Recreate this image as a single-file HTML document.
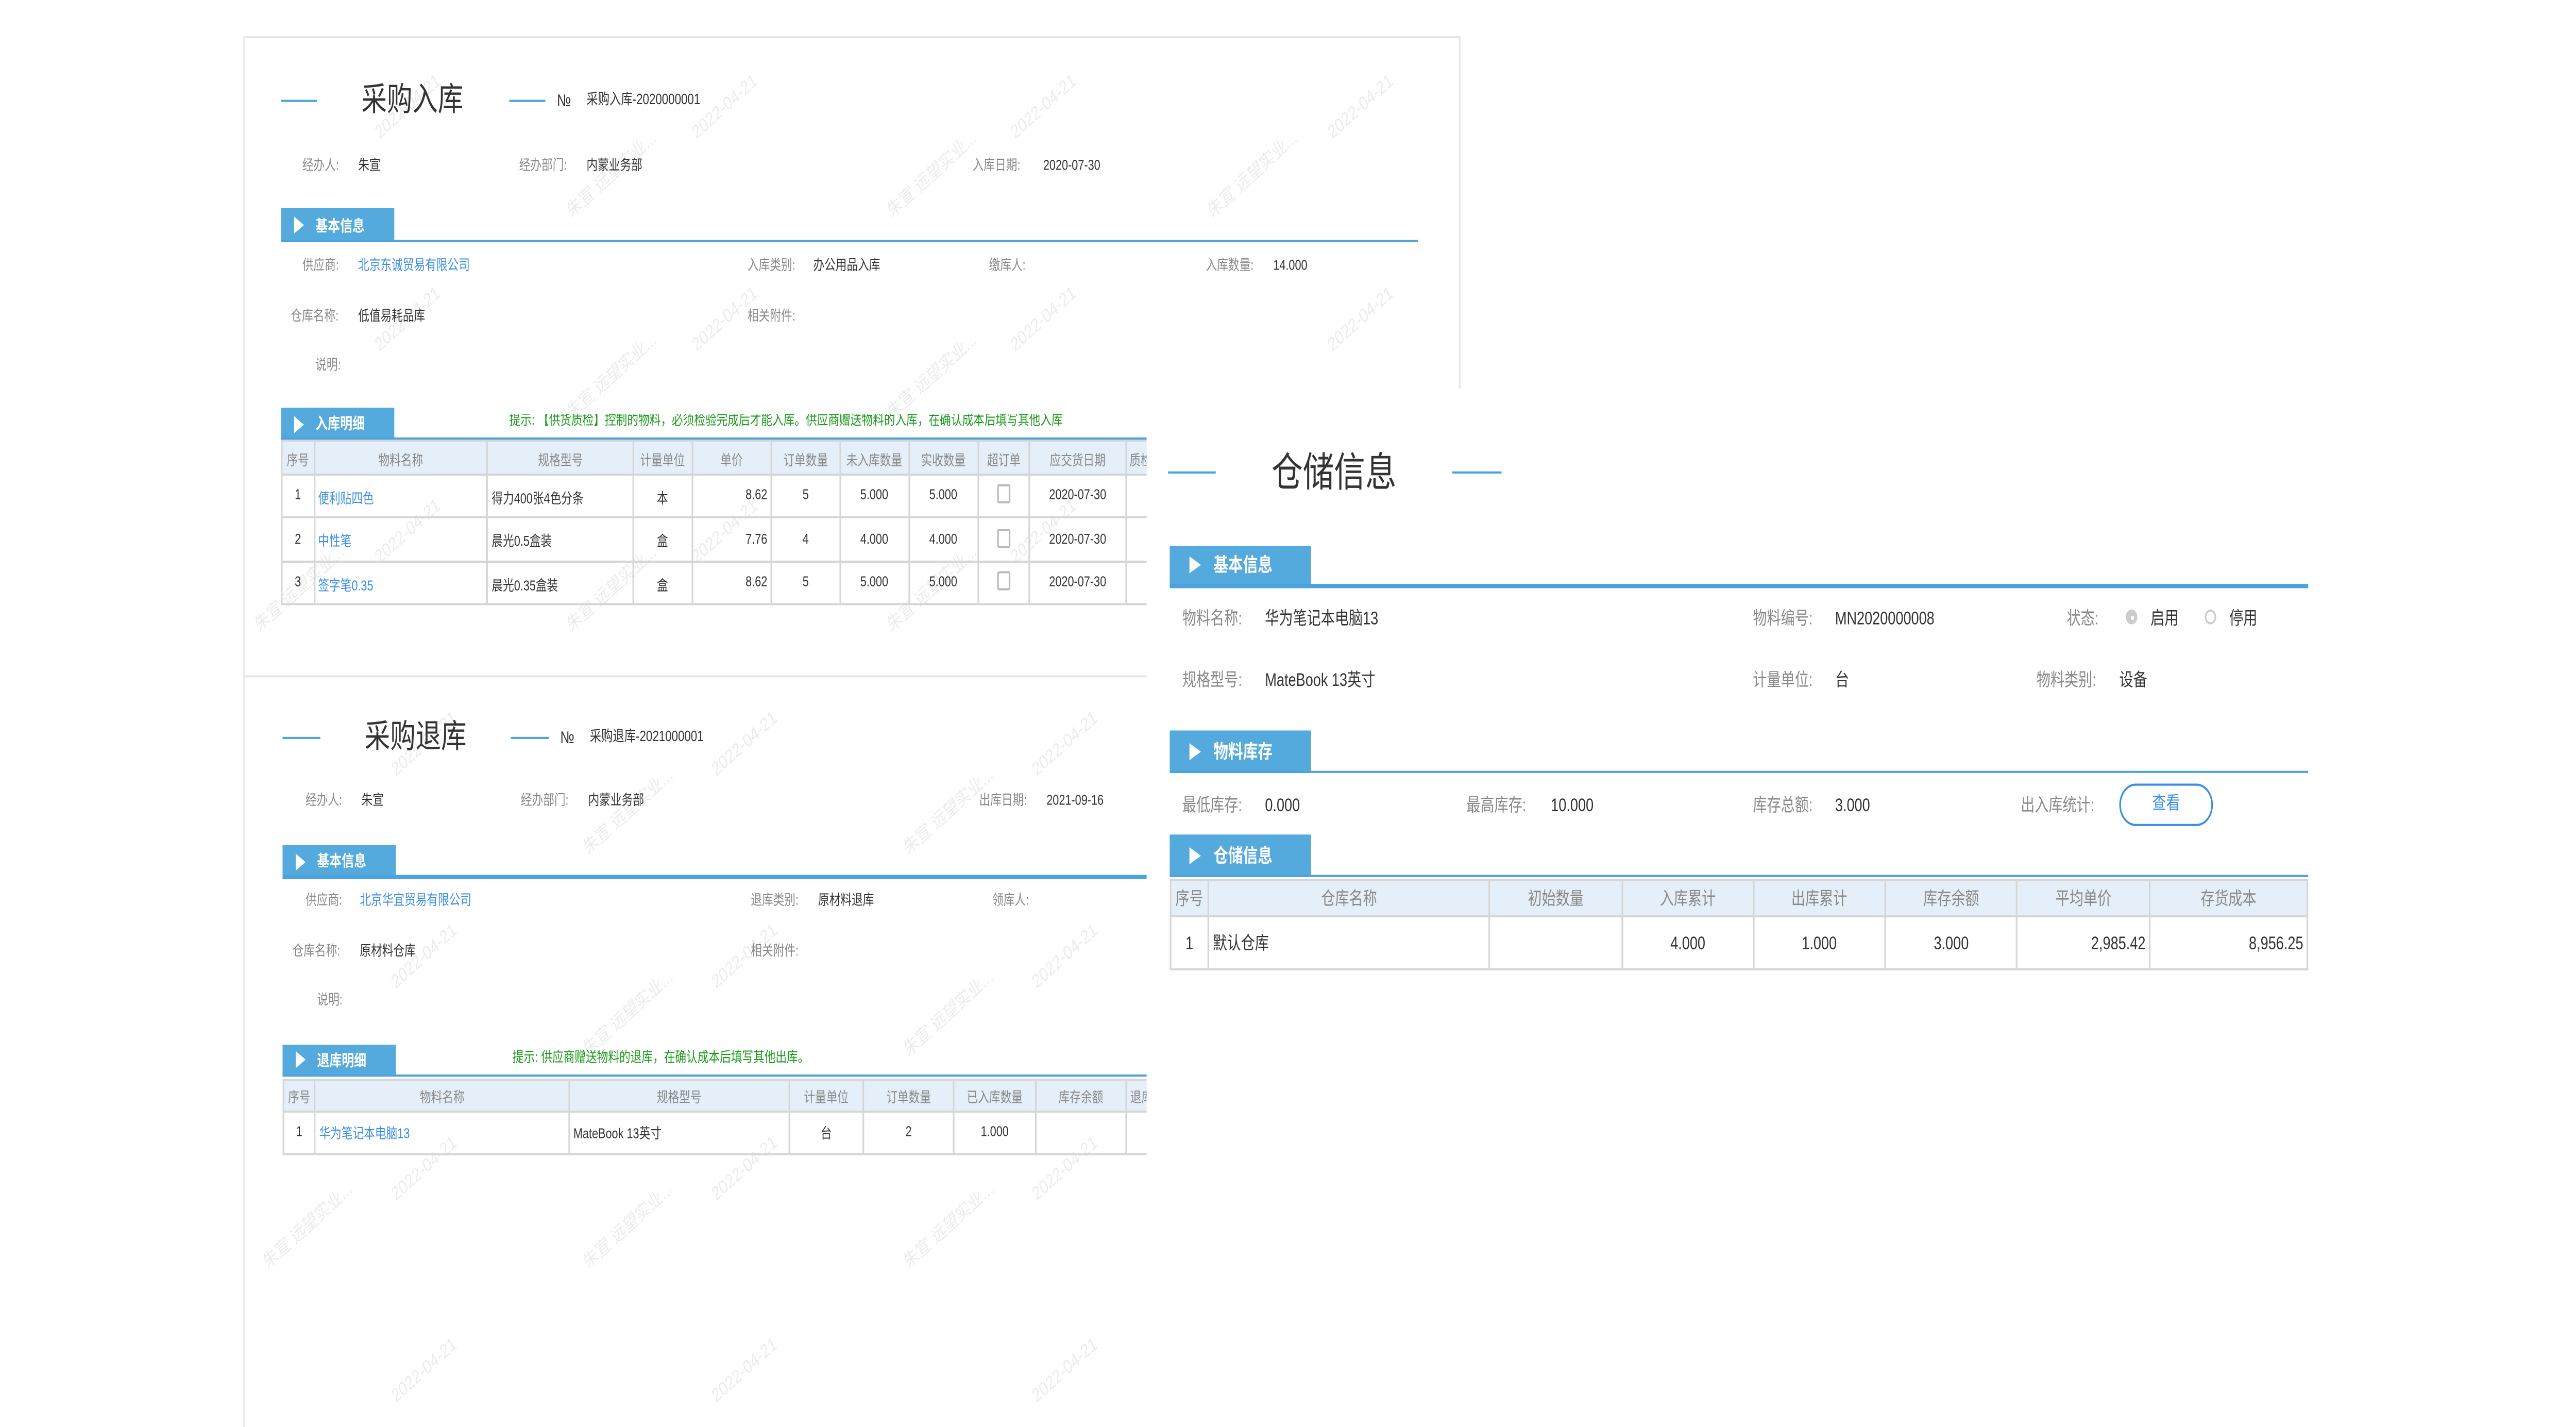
<!DOCTYPE html>
<html><head><meta charset="utf-8">
<style>
html,body{margin:0;padding:0;background:#fff;}
body{width:100vw;height:100vh;overflow:hidden;position:relative;}
#w{position:absolute;left:0;top:0;width:1568px;height:672px;transform:scale(4.11862,4.12054);transform-origin:0 0;font-family:"Liberation Sans","Noto Sans CJK SC",sans-serif;color:#333;}
.a{position:absolute;white-space:nowrap;}
.l{color:#888;}
.b{color:#3a8ee6;}
.sec{position:absolute;background:#55aadd;color:#fff;font-weight:bold;}
.sec i{position:absolute;width:0;height:0;border-top:4px solid transparent;border-bottom:4px solid transparent;border-left:6px solid #fff;}
.sline{position:absolute;height:1.3px;background:#4aa3df;}
table{border-collapse:collapse;table-layout:fixed;position:absolute;}
td{border:0.6px solid #d6d6d6;padding:0 2px;white-space:nowrap;overflow:hidden;}
tr.h td{background:#e5eff9;color:#888;text-align:center;}
.c{text-align:center}.r{text-align:right}
.wm{position:absolute;color:#ececec;transform:rotate(-35deg);white-space:nowrap;font-size:9px;}
.cb{display:inline-block;width:6px;height:7px;border:0.6px solid #bbb;border-radius:1px;}
</style></head><body><div id="w">

<div class="a" style="left:148px;top:17px;width:741px;height:1px;background:#e6e6e6"></div>
<div class="a" style="left:888px;top:17px;width:1px;height:170px;background:#e6e6e6"></div>
<div class="a" style="left:148px;top:17px;width:1px;height:655px;background:#ececec"></div>
<div class="a" style="left:148px;top:318px;width:550px;height:1px;background:#e6e6e6"></div>

<div class="wm" style="left:225px;top:45px">2022-04-21</div>
<div class="wm" style="left:418px;top:45px">2022-04-21</div>
<div class="wm" style="left:612px;top:45px">2022-04-21</div>
<div class="wm" style="left:805px;top:45px">2022-04-21</div>
<div class="wm" style="left:340px;top:75px">朱宣 远望实业...</div>
<div class="wm" style="left:535px;top:75px">朱宣 远望实业...</div>
<div class="wm" style="left:730px;top:75px">朱宣 远望实业...</div>
<div class="wm" style="left:225px;top:145px">2022-04-21</div>
<div class="wm" style="left:418px;top:145px">2022-04-21</div>
<div class="wm" style="left:612px;top:145px">2022-04-21</div>
<div class="wm" style="left:805px;top:145px">2022-04-21</div>
<div class="wm" style="left:340px;top:170px">朱宣 远望实业...</div>
<div class="wm" style="left:535px;top:170px">朱宣 远望实业...</div>
<div class="wm" style="left:225px;top:245px">2022-04-21</div>
<div class="wm" style="left:418px;top:245px">2022-04-21</div>
<div class="wm" style="left:612px;top:245px">2022-04-21</div>
<div class="wm" style="left:150px;top:270px">朱宣 远望实业...</div>
<div class="wm" style="left:340px;top:270px">朱宣 远望实业...</div>
<div class="wm" style="left:535px;top:270px">朱宣 远望实业...</div>
<div class="wm" style="left:235px;top:345px">2022-04-21</div>
<div class="wm" style="left:430px;top:345px">2022-04-21</div>
<div class="wm" style="left:625px;top:345px">2022-04-21</div>
<div class="wm" style="left:350px;top:375px">朱宣 远望实业...</div>
<div class="wm" style="left:545px;top:375px">朱宣 远望实业...</div>
<div class="wm" style="left:235px;top:445px">2022-04-21</div>
<div class="wm" style="left:430px;top:445px">2022-04-21</div>
<div class="wm" style="left:625px;top:445px">2022-04-21</div>
<div class="wm" style="left:350px;top:470px">朱宣 远望实业...</div>
<div class="wm" style="left:545px;top:470px">朱宣 远望实业...</div>
<div class="wm" style="left:235px;top:545px">2022-04-21</div>
<div class="wm" style="left:430px;top:545px">2022-04-21</div>
<div class="wm" style="left:625px;top:545px">2022-04-21</div>
<div class="wm" style="left:155px;top:570px">朱宣 远望实业...</div>
<div class="wm" style="left:350px;top:570px">朱宣 远望实业...</div>
<div class="wm" style="left:545px;top:570px">朱宣 远望实业...</div>
<div class="wm" style="left:235px;top:640px">2022-04-21</div>
<div class="wm" style="left:430px;top:640px">2022-04-21</div>
<div class="wm" style="left:625px;top:640px">2022-04-21</div>

<!-- Panel 1 -->
<div class="a" style="left:171px;top:47px;width:22px;height:1.3px;background:#4aa3df"></div>
<div class="a" style="left:220px;top:39px;font-size:15.5px;line-height:17px">采购入库</div>
<div class="a" style="left:310px;top:47px;width:22px;height:1.3px;background:#4aa3df"></div>
<div class="a" style="left:339px;top:43px;font-size:8px;line-height:9px">№</div>
<div class="a" style="left:357px;top:44px;font-size:7px;line-height:8px">采购入库-2020000001</div>

<div style="font-size:6.8px;line-height:8px">
<div class="a l" style="left:184px;top:75px">经办人:</div><div class="a" style="left:218px;top:75px">朱宣</div>
<div class="a l" style="left:316px;top:75px">经办部门:</div><div class="a" style="left:357px;top:75px">内蒙业务部</div>
<div class="a l" style="left:592px;top:75px">入库日期:</div><div class="a" style="left:635px;top:75px">2020-07-30</div>
<div class="a l" style="left:184px;top:122px">供应商:</div><div class="a b" style="left:218px;top:122px">北京东诚贸易有限公司</div>
<div class="a l" style="left:455px;top:122px">入库类别:</div><div class="a" style="left:495px;top:122px">办公用品入库</div>
<div class="a l" style="left:602px;top:122px">缴库人:</div>
<div class="a l" style="left:734px;top:122px">入库数量:</div><div class="a" style="left:775px;top:122px">14.000</div>
<div class="a l" style="left:177px;top:146px">仓库名称:</div><div class="a" style="left:218px;top:146px">低值易耗品库</div>
<div class="a l" style="left:455px;top:146px">相关附件:</div>
<div class="a l" style="left:192px;top:169px">说明:</div>
</div>

<div class="sec" style="left:171px;top:98px;width:69px;height:16px"><i style="left:8px;top:4px"></i><span class="a" style="left:21px;top:3.5px;font-size:7.5px;line-height:9px">基本信息</span></div>
<div class="sline" style="left:171px;top:112.7px;width:692px"></div>
<div class="sec" style="left:171px;top:192px;width:69px;height:15.5px"><i style="left:8px;top:3.8px"></i><span class="a" style="left:21px;top:3.3px;font-size:7.5px;line-height:9px">入库明细</span></div>
<div class="sline" style="left:171px;top:206px;width:527px"></div>
<div class="a" style="left:310px;top:194.5px;font-size:6.8px;line-height:8px;color:#1a9a1a;width:388px;overflow:hidden">提示: 【供货质检】控制的物料，必须检验完成后才能入库。供应商赠送物料的入库，在确认成本后填写其他入库</div>

<div class="a" style="left:171px;top:207.3px;width:527px;height:80px;overflow:hidden">
<table style="left:0;top:0;width:560px;font-size:6.8px">
<colgroup><col style="width:19.6px"><col style="width:105.7px"><col style="width:88.7px"><col style="width:35.6px"><col style="width:48.5px"><col style="width:41.7px"><col style="width:41.8px"><col style="width:42.2px"><col style="width:31.7px"><col style="width:58.1px"><col style="width:46px"></colgroup>
<tr class="h" style="height:15.7px"><td>序号</td><td>物料名称</td><td>规格型号</td><td>计量单位</td><td>单价</td><td>订单数量</td><td>未入库数量</td><td>实收数量</td><td>超订单</td><td>应交货日期</td><td style="text-align:left">质检</td></tr>
<tr style="height:20.5px"><td class="c">1</td><td class="b">便利贴四色</td><td>得力400张4色分条</td><td class="c">本</td><td class="r">8.62</td><td class="c">5</td><td class="c">5.000</td><td class="c">5.000</td><td class="c"><span class="cb"></span></td><td class="c">2020-07-30</td><td></td></tr>
<tr style="height:20.5px"><td class="c">2</td><td class="b">中性笔</td><td>晨光0.5盒装</td><td class="c">盒</td><td class="r">7.76</td><td class="c">4</td><td class="c">4.000</td><td class="c">4.000</td><td class="c"><span class="cb"></span></td><td class="c">2020-07-30</td><td></td></tr>
<tr style="height:20.5px"><td class="c">3</td><td class="b">签字笔0.35</td><td>晨光0.35盒装</td><td class="c">盒</td><td class="r">8.62</td><td class="c">5</td><td class="c">5.000</td><td class="c">5.000</td><td class="c"><span class="cb"></span></td><td class="c">2020-07-30</td><td></td></tr>
</table></div>

<!-- Panel 2 -->
<div class="a" style="left:172px;top:347px;width:23px;height:1.3px;background:#4aa3df"></div>
<div class="a" style="left:222px;top:339px;font-size:15.5px;line-height:17px">采购退库</div>
<div class="a" style="left:311px;top:347px;width:23px;height:1.3px;background:#4aa3df"></div>
<div class="a" style="left:341px;top:343px;font-size:8px;line-height:9px">№</div>
<div class="a" style="left:359px;top:344px;font-size:7px;line-height:8px">采购退库-2021000001</div>

<div style="font-size:6.8px;line-height:8px">
<div class="a l" style="left:186px;top:374px">经办人:</div><div class="a" style="left:220px;top:374px">朱宣</div>
<div class="a l" style="left:317px;top:374px">经办部门:</div><div class="a" style="left:358px;top:374px">内蒙业务部</div>
<div class="a l" style="left:596px;top:374px">出库日期:</div><div class="a" style="left:637px;top:374px">2021-09-16</div>
<div class="a l" style="left:186px;top:421px">供应商:</div><div class="a b" style="left:219px;top:421px">北京华宜贸易有限公司</div>
<div class="a l" style="left:457px;top:421px">退库类别:</div><div class="a" style="left:498px;top:421px">原材料退库</div>
<div class="a l" style="left:604px;top:421px">领库人:</div>
<div class="a l" style="left:178px;top:445px">仓库名称:</div><div class="a" style="left:219px;top:445px">原材料仓库</div>
<div class="a l" style="left:457px;top:445px">相关附件:</div>
<div class="a l" style="left:193px;top:468px">说明:</div>
</div>

<div class="sec" style="left:172px;top:398px;width:69px;height:15.5px"><i style="left:8px;top:3.8px"></i><span class="a" style="left:21px;top:3.3px;font-size:7.5px;line-height:9px">基本信息</span></div>
<div class="sline" style="left:172px;top:412.3px;width:526px"></div>
<div class="sec" style="left:172px;top:491.5px;width:69px;height:15.5px"><i style="left:8px;top:3.8px"></i><span class="a" style="left:21px;top:3.3px;font-size:7.5px;line-height:9px">退库明细</span></div>
<div class="sline" style="left:172px;top:506px;width:526px"></div>
<div class="a" style="left:312px;top:495px;font-size:6.8px;line-height:8px;color:#1a9a1a">提示: 供应商赠送物料的退库，在确认成本后填写其他出库。</div>

<div class="a" style="left:172px;top:507.9px;width:526px;height:40px;overflow:hidden">
<table style="left:0;top:0;width:560px;font-size:6.8px">
<colgroup><col style="width:19.3px"><col style="width:154.7px"><col style="width:133.8px"><col style="width:45.3px"><col style="width:55px"><col style="width:49.8px"><col style="width:55.1px"><col style="width:47px"></colgroup>
<tr class="h" style="height:14.7px"><td>序号</td><td>物料名称</td><td>规格型号</td><td>计量单位</td><td>订单数量</td><td>已入库数量</td><td>库存余额</td><td style="text-align:left">退库数量</td></tr>
<tr style="height:20.4px"><td class="c">1</td><td class="b">华为笔记本电脑13</td><td>MateBook 13英寸</td><td class="c">台</td><td class="c">2</td><td class="c">1.000</td><td></td><td></td></tr>
</table></div>

<!-- Panel 3 -->
<div class="a" style="left:698px;top:183px;width:730px;height:489px;background:#fff"></div>
<div class="a" style="left:711px;top:222px;width:29px;height:1.3px;background:#4aa3df"></div>
<div class="a" style="left:774px;top:213px;font-size:19px;line-height:21px">仓储信息</div>
<div class="a" style="left:884px;top:222px;width:30px;height:1.3px;background:#4aa3df"></div>

<div class="sec" style="left:711.6px;top:256.5px;width:86.5px;height:19.5px"><i style="left:12px;top:5.5px;border-top-width:4.5px;border-bottom-width:4.5px;border-left-width:7px"></i><span class="a" style="left:27px;top:4.5px;font-size:9px;line-height:10px">基本信息</span></div>
<div class="sline" style="left:711.6px;top:275px;width:693px;height:1.6px"></div>
<div class="sec" style="left:711.6px;top:344px;width:86.5px;height:19.5px"><i style="left:12px;top:5.5px;border-top-width:4.5px;border-bottom-width:4.5px;border-left-width:7px"></i><span class="a" style="left:27px;top:4.5px;font-size:9px;line-height:10px">物料库存</span></div>
<div class="sline" style="left:711.6px;top:362.5px;width:693px;height:1.6px"></div>
<div class="sec" style="left:711.6px;top:393px;width:86.5px;height:19.5px"><i style="left:12px;top:5.5px;border-top-width:4.5px;border-bottom-width:4.5px;border-left-width:7px"></i><span class="a" style="left:27px;top:4.5px;font-size:9px;line-height:10px">仓储信息</span></div>
<div class="sline" style="left:711.6px;top:411.5px;width:693px;height:1.6px"></div>

<div style="font-size:8.5px;line-height:10px">
<div class="a l" style="left:719.7px;top:286px">物料名称:</div><div class="a" style="left:770px;top:286px">华为笔记本电脑13</div>
<div class="a l" style="left:1067px;top:286px">物料编号:</div><div class="a" style="left:1117px;top:286px">MN2020000008</div>
<div class="a l" style="left:1258px;top:286px">状态:</div>
<div class="a" style="left:1293.5px;top:286.5px;width:7px;height:7px;border-radius:50%;background:#ccc;border:0.8px solid #ccc;box-sizing:border-box"><div style="position:absolute;left:2px;top:2px;width:2.2px;height:2.2px;border-radius:50%;background:#fff"></div></div>
<div class="a" style="left:1309px;top:286px">启用</div>
<div class="a" style="left:1342px;top:286.5px;width:7px;height:7px;border-radius:50%;border:0.8px solid #ccc;box-sizing:border-box"></div>
<div class="a" style="left:1357px;top:286px">停用</div>
<div class="a l" style="left:719.7px;top:315px">规格型号:</div><div class="a" style="left:770px;top:315px">MateBook 13英寸</div>
<div class="a l" style="left:1067px;top:315px">计量单位:</div><div class="a" style="left:1117px;top:315px">台</div>
<div class="a l" style="left:1239.6px;top:315px">物料类别:</div><div class="a" style="left:1290px;top:315px">设备</div>
<div class="a l" style="left:719.7px;top:374px">最低库存:</div><div class="a" style="left:770px;top:374px">0.000</div>
<div class="a l" style="left:892.6px;top:374px">最高库存:</div><div class="a" style="left:944px;top:374px">10.000</div>
<div class="a l" style="left:1067px;top:374px">库存总额:</div><div class="a" style="left:1117px;top:374px">3.000</div>
<div class="a l" style="left:1230px;top:374px">出入库统计:</div>
<div class="a" style="left:1290px;top:369px;width:57px;height:19.5px;border:1px solid #3a8ee6;border-radius:10px;box-sizing:border-box;color:#3a8ee6;text-align:center;line-height:17.5px">查看</div>
</div>

<table style="left:711.6px;top:413.5px;width:692.4px;font-size:8.5px">
<colgroup><col style="width:23.8px"><col style="width:170.6px"><col style="width:81px"><col style="width:79.8px"><col style="width:80.2px"><col style="width:80.5px"><col style="width:80.5px"><col style="width:96px"></colgroup>
<tr class="h" style="height:17.5px"><td>序号</td><td>仓库名称</td><td>初始数量</td><td>入库累计</td><td>出库累计</td><td>库存余额</td><td>平均单价</td><td>存货成本</td></tr>
<tr style="height:25px"><td class="c">1</td><td>默认仓库</td><td></td><td class="c">4.000</td><td class="c">1.000</td><td class="c">3.000</td><td class="r">2,985.42</td><td class="r">8,956.25</td></tr>
</table>

</div>
<script>
(function(){
var w=document.documentElement.clientWidth||window.innerWidth||6458;
var h=document.documentElement.clientHeight||window.innerHeight||2769;
document.getElementById('w').style.transform='scale('+(w/1568)+','+(h/672)+')';
})();
</script>
</body></html>
